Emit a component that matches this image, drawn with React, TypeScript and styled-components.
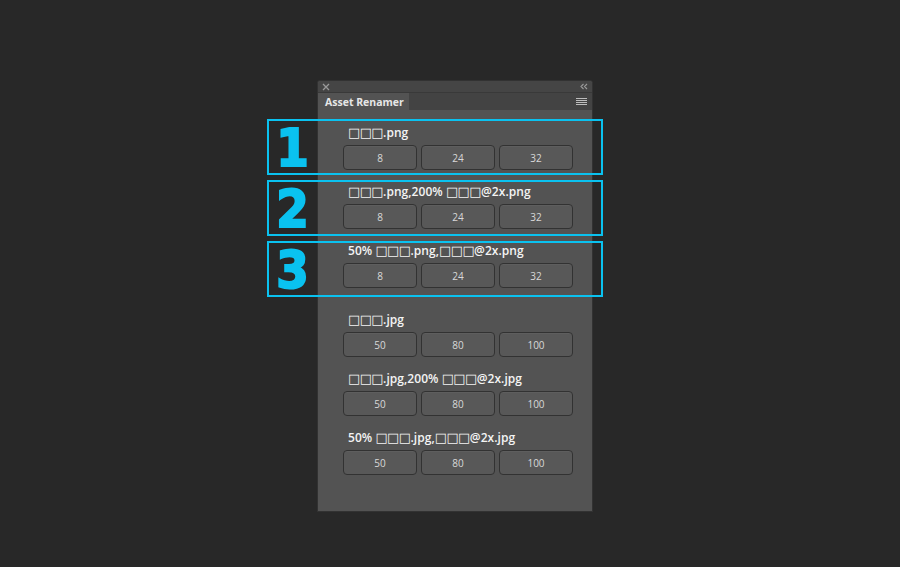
import React from "react";
import styled, { createGlobalStyle } from "styled-components";

const GlobalStyle = createGlobalStyle`
  html, body {
    margin: 0;
    padding: 0;
    background: #282828;
    height: 567px;
    overflow: hidden;
  }
  * { box-sizing: border-box; }
`;

const Stage = styled.div`
  min-height: 567px;
  padding: 80px 0 0 317px;
  display: flex;
  align-items: flex-start;
`;

const Panel = styled.div`
  position: relative;
  width: 276px;
  height: 432px;
  border: 1px solid #323232;
  border-radius: 3px 3px 0 0;
  background: #535353;
  display: flex;
  flex-direction: column;
`;

const TitleBar = styled.div`
  height: 11px;
  background: #454545;
  display: flex;
  align-items: center;
  justify-content: space-between;
  padding: 0 4px 0 4px;
  border-radius: 2px 2px 0 0;
`;

const TabBar = styled.div`
  height: 18px;
  background: #434343;
  border-top: 1px solid #393939;
  display: flex;
  align-items: stretch;
`;

const Tab = styled.div`
  width: 91px;
  background: #535353;
  padding-left: 7px;
  display: flex;
  align-items: center;
  font-family: "Open Sans", "DejaVu Sans", sans-serif;
  font-weight: 700;
  font-size: 10.5px;
  color: #e6e6e6;
`;

const MenuBtn = styled.div`
  margin-left: auto;
  margin-right: 5px;
  display: flex;
  align-items: center;
`;

const Body = styled.div`
  flex: 1;
  padding: 15px 0 0 25px;
`;

const Section = styled.div<{ $gap: number }>`
  margin-bottom: ${(p) => p.$gap}px;
`;

const Label = styled.div`
  height: 16px;
  line-height: 16px;
  padding-left: 5px;
  font-family: "Open Sans", "DejaVu Sans", sans-serif;
  font-size: 12px;
  font-weight: 600;
  letter-spacing: 0.05px;
  color: #f4f4f4;
  white-space: nowrap;
`;

const Sq = styled.span`
  font-family: "DejaVu Sans", sans-serif;
  font-size: 13px;
  font-weight: 400;
  letter-spacing: -0.6px;
`;

const ButtonRow = styled.div`
  display: flex;
  gap: 4px;
  margin-top: 4px;
`;

const Btn = styled.button`
  width: 74px;
  height: 25px;
  padding: 0;
  border: 1px solid #323232;
  border-radius: 4px;
  background: #585858;
  color: #d8d8d8;
  font-family: "Open Sans", "DejaVu Sans", sans-serif;
  font-size: 10px;
  box-shadow: inset 0 1px 0 rgba(255, 255, 255, 0.04);
`;

const Marker = styled.div<{ $top: number }>`
  position: absolute;
  left: -51px;
  top: ${(p) => p.$top}px;
  width: 336px;
  height: 56px;
  border: 2px solid #0ac2f0;
  display: flex;
  align-items: center;
  pointer-events: none;
`;

const MarkerNum = styled.div`
  width: 47px;
  text-align: center;
  font-family: "Liberation Sans Narrow", "DejaVu Sans Condensed", "Liberation Sans", sans-serif;
  font-weight: 700;
  font-size: 52px;
  line-height: 1;
  color: #0ac2f0;
  -webkit-text-stroke: 2px #0ac2f0;
  margin-top: 2px;
`;

const Squares = () => <Sq>□□□</Sq>;

type Group = { label: React.ReactNode; values: string[]; gap: number };

const groups: Group[] = [
  { label: <><Squares />.png</>, values: ["8", "24", "32"], gap: 14 },
  { label: <><Squares />.png,200% <Squares />@2x.png</>, values: ["8", "24", "32"], gap: 14 },
  { label: <>50% <Squares />.png,<Squares />@2x.png</>, values: ["8", "24", "32"], gap: 24 },
  { label: <><Squares />.jpg</>, values: ["50", "80", "100"], gap: 14 },
  { label: <><Squares />.jpg,200% <Squares />@2x.jpg</>, values: ["50", "80", "100"], gap: 14 },
  { label: <>50% <Squares />.jpg,<Squares />@2x.jpg</>, values: ["50", "80", "100"], gap: 14 },
];

const markers = [
  { n: "1", top: 38 },
  { n: "2", top: 99 },
  { n: "3", top: 160 },
];

export default function App() {
  return (
    <>
      <GlobalStyle />
      <Stage>
        <Panel>
          <TitleBar>
            <svg width="8" height="8" viewBox="0 0 8 8">
              <path d="M1 1 L7 7 M7 1 L1 7" stroke="#9a9a9a" strokeWidth="1.3" />
            </svg>
            <svg width="8" height="7" viewBox="0 0 8 7">
              <path d="M3.5 1 L1 3.5 L3.5 6 M7 1 L4.5 3.5 L7 6" stroke="#9a9a9a" strokeWidth="1.1" fill="none" />
            </svg>
          </TitleBar>
          <TabBar>
            <Tab>Asset Renamer</Tab>
            <MenuBtn>
              <svg width="11" height="8" viewBox="0 0 11 8">
                <path d="M0 0.5 H11 M0 2.5 H11 M0 4.5 H11 M0 6.5 H11" stroke="#bdbdbd" strokeWidth="1" />
              </svg>
            </MenuBtn>
          </TabBar>
          <Body>
            {groups.map((g, i) => (
              <Section key={i} $gap={g.gap}>
                <Label>{g.label}</Label>
                <ButtonRow>
                  {g.values.map((v) => (
                    <Btn key={v}>{v}</Btn>
                  ))}
                </ButtonRow>
              </Section>
            ))}
          </Body>
          {markers.map((m) => (
            <Marker key={m.n} $top={m.top}>
              <MarkerNum>{m.n}</MarkerNum>
            </Marker>
          ))}
        </Panel>
      </Stage>
    </>
  );
}
